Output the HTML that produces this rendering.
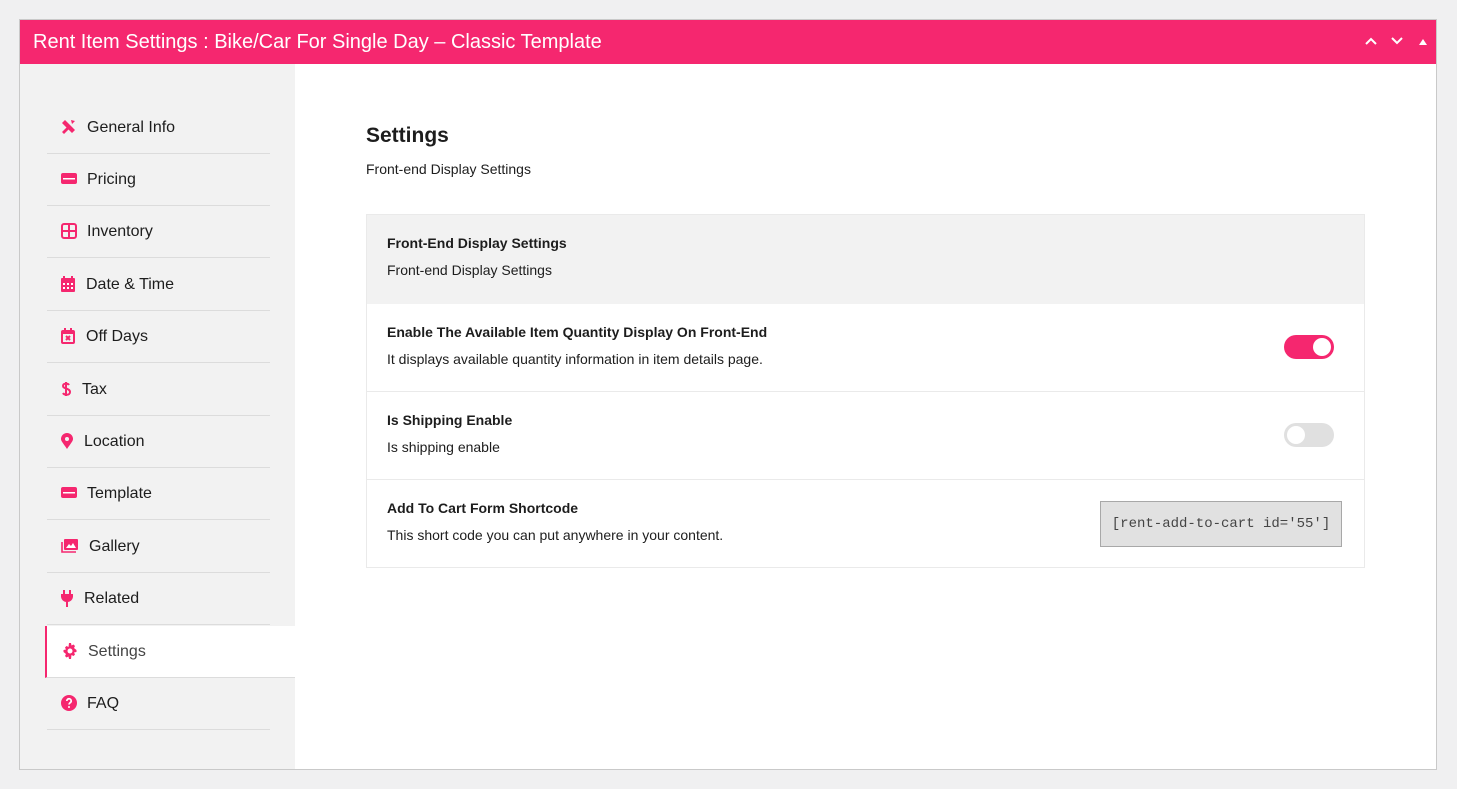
<!DOCTYPE html>
<html><head><meta charset="utf-8"><style>
*{box-sizing:border-box;margin:0;padding:0}
body{width:1457px;height:789px;background:#f0f0f1;font-family:"Liberation Sans",sans-serif;color:#1d1d1d;position:relative;overflow:hidden}
.box{position:absolute;left:19px;top:19px;width:1418px;height:751px;border:1px solid #c9c9c9;background:#fff}
.hd{position:absolute;left:0;top:0;width:1416px;height:44px;background:#f5276f;color:#fff;font-size:20px;line-height:44px;padding-left:13px}
.hd svg{position:absolute;top:16px}
.side{position:absolute;left:0;top:44px;width:275px;height:705px;background:#f2f2f2}
.it{position:absolute;left:27px;width:223px;height:52px;border-bottom:1px solid #dcdcdc;font-size:16px;line-height:52px;padding-left:40px}
.it svg{position:absolute;left:14px;top:17px}
.it.act{left:25px;width:250px;background:#fff;border-left:2px solid #f5276f;padding-left:41px;color:#444}
.it.act svg{left:15px}
h1{position:absolute;left:366px;top:124px;font-size:21px;font-weight:bold}
.sub{position:absolute;left:366px;top:161px;font-size:14px}
.tbl{position:absolute;left:366px;top:214px;width:999px;height:354px;border:1px solid #eaeaea}
.row{position:absolute;left:0;width:997px;height:88px;border-bottom:1px solid #eaeaea;padding:20px 20px}
.row b{display:block;font-size:14px;margin-bottom:11px}
.row span{font-size:14px}
.tg{position:absolute;right:30px;top:31px;width:50px;height:24px;border-radius:12px;background:#f5276f}
.tg i{position:absolute;right:3px;top:3px;width:18px;height:18px;border-radius:50%;background:#fff}
.tg.off{background:#e0e0e0}.tg.off i{right:auto;left:3px}
.sc{position:absolute;right:22px;top:21px;width:242px;height:46px;background:#e1e1e1;border:1px solid #a8a8a8;font-family:"Liberation Mono",monospace;font-size:14px;line-height:44px;text-align:center;color:#444}
</style></head><body>
<div class="box">
<div class="hd">Rent Item Settings : Bike/Car For Single Day – Classic Template
<svg style="left:1344px" width="14" height="10" viewBox="0 0 14 10"><path d="M2 8l5-5 5 5" stroke="#fff" stroke-width="2" fill="none"/></svg>
<svg style="left:1370px" width="14" height="10" viewBox="0 0 14 10"><path d="M2 2l5 5 5-5" stroke="#fff" stroke-width="2" fill="none"/></svg>
<svg style="left:1398px;top:18px" width="10" height="8" viewBox="0 0 10 8"><path d="M1 7L5 1l4 6z" fill="#fff"/></svg>
</div>
<div class="side">
<div class="it" style="top:38px"><svg width="16" height="16" viewBox="0 0 16 16"><path d="M2 3l2-2 10 10-3 3L1 4zM10 1l4 1-3 3zM1 13l5-5 2 2-5 5z" fill="#f5276f"/></svg>General Info</div>
<div class="it" style="top:90px"><svg width="16" height="14" viewBox="0 0 16 14"><rect x="0" y="2" width="16" height="11" rx="2" fill="#f5276f"/><rect x="2" y="7" width="12" height="1.5" fill="#fff"/></svg>Pricing</div>
<div class="it" style="top:142px"><svg width="16" height="16" viewBox="0 0 16 16"><rect x="1" y="1" width="14" height="14" rx="2" fill="none" stroke="#f5276f" stroke-width="2"/><path d="M8 1v14M1 8h14" stroke="#f5276f" stroke-width="2"/></svg>Inventory</div>
<div class="it" style="top:195px;padding-left:39px"><svg width="14" height="16" viewBox="0 0 14 16"><rect x="0" y="2" width="14" height="14" rx="1" fill="#f5276f"/><path d="M3 0v3M11 0v3" stroke="#f5276f" stroke-width="2"/><path d="M2 8h2M6 8h2M10 8h2M2 12h2M6 12h2M10 12h2" stroke="#fff" stroke-width="2"/></svg>Date &amp; Time</div>
<div class="it" style="top:247px;padding-left:39px"><svg width="14" height="16" viewBox="0 0 14 16"><rect x="1" y="3" width="12" height="12" rx="1" fill="none" stroke="#f5276f" stroke-width="2"/><path d="M1 5h12M4 0v3M10 0v3M5 8l4 4M9 8l-4 4" stroke="#f5276f" stroke-width="2"/></svg>Off Days</div>
<div class="it" style="top:300px;padding-left:35px"><svg width="10" height="16" viewBox="0 0 10 16"><path d="M8 4C7 2 2 2 2 5s7 2 7 6-6 3-7 1M5 1v14" stroke="#f5276f" stroke-width="2" fill="none"/></svg>Tax</div>
<div class="it" style="top:352px;padding-left:37px"><svg width="12" height="16" viewBox="0 0 12 16"><path d="M6 16C2 10 0 8 0 6a6 6 0 0112 0c0 2-2 4-6 10z" fill="#f5276f"/><circle cx="6" cy="6" r="2" fill="#f2f2f2"/></svg>Location</div>
<div class="it" style="top:404px"><svg width="16" height="14" viewBox="0 0 16 14"><rect x="0" y="2" width="16" height="11" rx="2" fill="#f5276f"/><rect x="2" y="7" width="12" height="1.5" fill="#fff"/></svg>Template</div>
<div class="it" style="top:457px;padding-left:42px"><svg width="18" height="16" viewBox="0 0 18 16"><rect x="3" y="1" width="14" height="11" rx="1" fill="#f5276f"/><path d="M5 10l3-4 2 2 2-3 3 5z" fill="#fff"/><path d="M1 4v10h14" stroke="#f5276f" stroke-width="1.6" fill="none"/></svg>Gallery</div>
<div class="it" style="top:509px;padding-left:37px"><svg width="12" height="18" viewBox="0 0 12 18"><path d="M3 0v4M9 0v4" stroke="#f5276f" stroke-width="2"/><path d="M0 4h12v3a6 6 0 01-5 5v5H5v-5A6 6 0 010 7z" fill="#f5276f"/></svg>Related</div>
<div class="it act" style="top:562px"><svg width="16" height="16" viewBox="0 0 16 16"><path d="M7 0h2l.5 2.5 2-1 1.5 1.5-1 2L14.5 7v2l-2.5.5 1 2-1.5 1.5-2-1L9 16H7l-.5-2.5-2 1L3 13l1-2L1.5 9V7L4 6.5l-1-2L4.5 3l2 1z" fill="#f5276f"/><circle cx="8" cy="8" r="2.5" fill="#fff"/></svg>Settings</div>
<div class="it" style="top:614px"><svg width="16" height="16" viewBox="0 0 16 16"><circle cx="8" cy="8" r="8" fill="#f5276f"/><path d="M5.8 6a2.2 2.2 0 114 1.2c-1 .8-1.8 1-1.8 2.3" stroke="#fff" stroke-width="1.7" fill="none"/><circle cx="8" cy="12" r="1" fill="#fff"/></svg>FAQ</div>
</div>
</div>
<h1>Settings</h1>
<div class="sub">Front-end Display Settings</div>
<div class="tbl">
<div class="row" style="top:0;background:#f2f2f2;border-bottom:0;height:89px"><b>Front-End Display Settings</b><span>Front-end Display Settings</span></div>
<div class="row" style="top:89px"><b>Enable The Available Item Quantity Display On Front-End</b><span>It displays available quantity information in item details page.</span><div class="tg"><i></i></div></div>
<div class="row" style="top:177px"><b>Is Shipping Enable</b><span>Is shipping enable</span><div class="tg off"><i></i></div></div>
<div class="row" style="top:265px;border-bottom:0"><b>Add To Cart Form Shortcode</b><span>This short code you can put anywhere in your content.</span><div class="sc">[rent-add-to-cart id='55']</div></div>
</div>
</body></html>
